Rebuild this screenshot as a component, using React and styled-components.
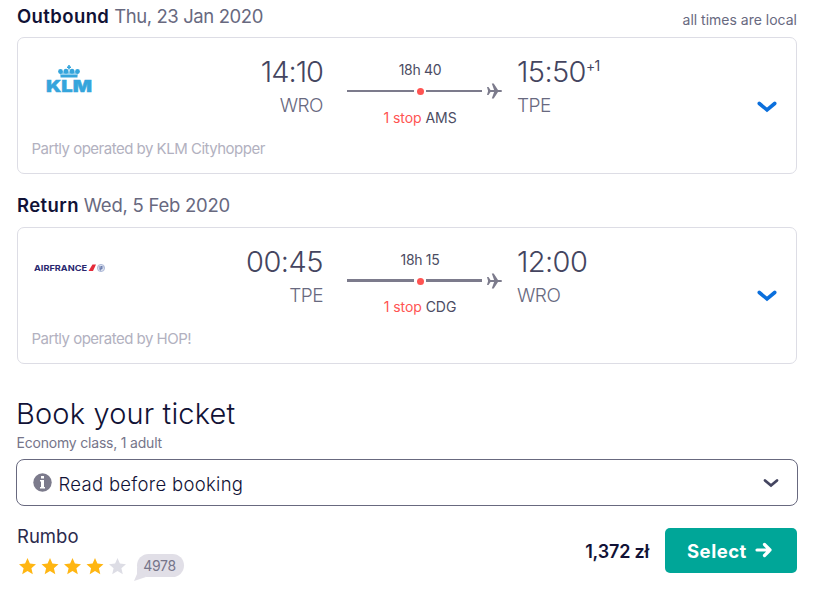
import styled, { createGlobalStyle } from 'styled-components'

const GlobalStyle = createGlobalStyle`
    * {
        box-sizing: border-box;
    }
    body {
        margin: 0;
        background: #fff;
        font-family: Inter, "Liberation Sans", sans-serif;
        color: #111236;
        overflow: hidden;
    }
    h2, h3, p {
        margin: 0;
        font-weight: 400;
    }
`

const Page = styled.div`
    width: 814px;
    height: 589px;
    padding: 0 17px;
`

const LegHeader = styled.div`
    display: flex;
    justify-content: space-between;
    align-items: flex-start;
    height: ${props => props.height}px;
    padding-top: ${props => props.padt}px;
`

const LegTitle = styled.h3`
    font-size: 18.5px;
    line-height: 24px;
    color: #68697f;
    letter-spacing: ${props => props.spacing}px;
    white-space: nowrap;
`

const Direction = styled.b`
    font-weight: 600;
    color: #111236;
    letter-spacing: 0.4px;
`

const LocalTimes = styled.span`
    font-size: 14px;
    line-height: 20px;
    margin-top: 6px;
    color: #68697f;
    letter-spacing: 0;
`

const Card = styled.section`
    height: 137px;
    border: 1px solid #dddde5;
    border-radius: 7px;
`

const Flight = styled.div`
    display: grid;
    grid-template-columns: 103px 202px 24px 155px 15px 1fr 50px;
    height: 100px;
`

const Logo = styled.div`
    display: flex;
    justify-content: center;
    align-items: flex-start;
    padding-top: ${props => props.padt}px;
`

const Endpoint = styled.div`
    padding-top: 16px;
    text-align: ${props => props.align};
    grid-column: ${props => props.column};
`

const Time = styled.div`
    font-size: 29px;
    line-height: 36px;
    font-weight: 300;
    color: #444560;
    letter-spacing: ${props => props.spacing}px;
    white-space: nowrap;
`

const DayOffset = styled.sup`
    font-size: 14px;
    font-weight: 400;
    line-height: 0;
    vertical-align: 11px;
    letter-spacing: -0.8px;
`

const Airport = styled.div`
    margin-top: 4px;
    font-size: 19px;
    line-height: 24px;
    font-weight: 300;
    color: #68697f;
    letter-spacing: -0.5px;
`

const Stops = styled.div`
    grid-column: 4;
    padding-top: 22px;
    font-size: 14px;
    line-height: 20px;
    color: #4c4c63;
`

const StopText = styled.div`
    width: 146px;
    text-align: center;
    letter-spacing: ${props => props.spacing}px;
`

const StopCount = styled.span`
    color: #ff5452;
`

const Route = styled.div`
    display: flex;
    align-items: center;
    height: ${props => props.height}px;
    margin-bottom: 6px;
`

const Line = styled.span`
    width: ${props => props.width}px;
    height: ${props => props.thick}px;
    background: #7c7b8c;
`

const Dot = styled.span`
    width: 7px;
    height: 7px;
    margin: 1px 2.5px 0;
    border-radius: 50%;
    background: #ff5452;
`

const PlaneIcon = styled.svg`
    margin-left: 5px;
`

const Expand = styled.div`
    grid-column: 7;
    padding: ${props => props.padt}px 0 0 11px;
`

const Operator = styled.p`
    padding-left: 13.5px;
    font-size: 15px;
    line-height: 21px;
    color: #b2b1c0;
    letter-spacing: -0.5px;
`

const BookTitle = styled.h2`
    margin: 32px 0 0 -1px;
    font-size: 29px;
    line-height: 36px;
    font-weight: 300;
    letter-spacing: 0.15px;
`

const Cabin = styled.p`
    margin: 1px 0 0 -0.5px;
    font-size: 14px;
    line-height: 20px;
    color: #76758a;
    letter-spacing: -0.2px;
`

const ReadBox = styled.div`
    display: flex;
    align-items: center;
    height: 47px;
    margin: 6px -1px 0;
    padding: 2px 18.5px 0 16px;
    border: 1px solid #68697f;
    border-radius: 8px;
    font-size: 18.5px;
    font-weight: 300;
    letter-spacing: 0.3px;
`

const InfoIcon = styled.svg`
    margin: -3px 6.5px 0 0;
`

const ReadChevron = styled.svg`
    margin-left: auto;
`

const Offer = styled.div`
    display: flex;
    justify-content: space-between;
    padding-top: 18px;
`

const Agent = styled.div`
    font-size: 18.5px;
    line-height: 24px;
    color: #2b2b4d;
`

const Rating = styled.div`
    display: flex;
    align-items: flex-start;
    margin-top: 6px;
`

const Stars = styled.svg`
    margin: 3px 0 0 1px;
`

const Reviews = styled.span`
    position: relative;
    width: 47px;
    height: 23px;
    margin-left: 9px;
    border-radius: 12px;
    background: #e1dfe7;
    font-size: 14px;
    line-height: 23px;
    text-align: center;
    color: #76758a;
    letter-spacing: -0.3px;
`

const BubbleTail = styled.svg`
    position: absolute;
    left: -3px;
    bottom: -4px;
`

const ReviewCount = styled.span`
    position: relative;
    margin-right: 2px;
`

const Purchase = styled.div`
    display: flex;
    align-items: center;
    gap: 16px;
    height: 45px;
    margin-top: 4px;
`

const Price = styled.span`
    font-size: 18px;
    font-weight: 600;
    margin-top: 2px;
    letter-spacing: -0.2px;
`

const SelectButton = styled.button`
    display: flex;
    align-items: center;
    width: 132px;
    height: 45px;
    padding: 0 0 0 22px;
    border: 0;
    border-radius: 5px;
    background: #00a698;
    color: #fff;
    font: 700 18.5px Inter, sans-serif;
    letter-spacing: 0.5px;
`

const ArrowIcon = styled.svg`
    margin: -2px 0 0 8px;
`

const KlmLogo = () => (
    <svg width="51" height="34" viewBox="0 0 51 34">
        <g fill="#35a5dc">
            <path d="M24.200 1h1.600v1.500H27V4h-1.200v1.500h-1.600V4H23V2.500h1.200z" />
            <circle cx="16.500" cy="7.500" r="2.400" />
            <circle cx="22" cy="7.300" r="2.500" />
            <circle cx="28" cy="7.300" r="2.500" />
            <circle cx="33.500" cy="7.500" r="2.400" />
            <path d="M15 8h20l-1.500 3.500h-17z" opacity=".55" />
            <path d="M16.500 11h17v2.500h-17z" />
        </g>
        <text x="2" y="27.500" fill="#35a5dc" stroke="#35a5dc" strokeWidth=".4" fontSize="16" fontWeight="900" fontFamily="Inter" textLength="46" lengthAdjust="spacingAndGlyphs">KLM</text>
    </svg>
)

const AirFranceLogo = () => (
    <svg width="71" height="12" viewBox="0 0 71 12">
        <text x="0" y="8" fill="#29286f" fontSize="8" fontWeight="700" fontFamily="Inter" textLength="53" lengthAdjust="spacingAndGlyphs">AIRFRANCE</text>
        <path d="M54.500 8l4-6.500h3.500L59 8z" fill="#e52a39" />
        <circle cx="67" cy="5" r="3.600" fill="#dce2ef" stroke="#9fadd0" strokeWidth=".8" />
        <path d="M64.800 4h4.500M67.500 3L66.500 7.500M65 6l3.500-.500" fill="none" stroke="#5266a0" strokeWidth=".8" />
    </svg>
)

const Chevron = () => (
    <svg width="20" height="14" viewBox="0 0 20 14">
        <path d="M2.300 3.500L10 9.800l7.700-6.300" fill="none" stroke="#0b6fdc" strokeWidth="3.600" strokeLinecap="round" strokeLinejoin="miter" />
    </svg>
)

const Plane = () => (
    <PlaneIcon width="15" height="16" viewBox="0 0 15 16">
        <path d="M0 4h1.500l2 2.900h3.600L4.800.5h1.900l4.300 6.400h2.900a1.100 1.100 0 0 1 0 2.200H11l-4.300 6.400H4.800l2.300-6.400H3.500L1.500 12H0l1.100-4z" fill="#7c7b8c" />
    </PlaneIcon>
)

const legs = [
    {
        direction: 'Outbound', date: 'Thu, 23 Jan 2020', note: 'all times are local', height: 37, padt: 4, thick: 2,
        dateSpacing: -0.4, departSpacing: -1, routeHeight: 22, expandTop: 60,
        logo: <KlmLogo />, logoTop: 26, depart: '14:10', from: 'WRO', arrive: '15:50', offset: '+1', to: 'TPE',
        duration: '18h 40', stop: 'AMS', operator: 'Partly operated by KLM Cityhopper',
    },
    {
        direction: 'Return', date: 'Wed, 5 Feb 2020', height: 53, padt: 19, thick: 3,
        dateSpacing: -0.25, departSpacing: -0.5, routeHeight: 21, expandTop: 59,
        logo: <AirFranceLogo />, logoTop: 35, depart: '00:45', from: 'TPE', arrive: '12:00', to: 'WRO',
        duration: '18h 15', stop: 'CDG', operator: 'Partly operated by HOP!',
    },
]

const Leg = ({ leg }) => {

    return <>
        <LegHeader height={leg.height} padt={leg.padt}>
            <LegTitle spacing={leg.dateSpacing}><Direction>{leg.direction}</Direction> {leg.date}</LegTitle>
            {leg.note ? <LocalTimes>{leg.note}</LocalTimes> : null}
        </LegHeader>
        <Card>
            <Flight>
                <Logo padt={leg.logoTop}>{leg.logo}</Logo>
                <Endpoint align='right' column={2}>
                    <Time spacing={leg.departSpacing}>{leg.depart}</Time>
                    <Airport>{leg.from}</Airport>
                </Endpoint>
                <Stops>
                    <StopText spacing={-0.3}>{leg.duration}</StopText>
                    <Route height={leg.routeHeight}>
                        <Line width={67} thick={leg.thick} />
                        <Dot />
                        <Line width={56} thick={leg.thick} />
                        <Plane />
                    </Route>
                    <StopText spacing={-0.05}><StopCount>1 stop</StopCount> {leg.stop}</StopText>
                </Stops>
                <Endpoint align='left' column={6}>
                    <Time spacing={-0.6}>{leg.arrive}{leg.offset ? <DayOffset>{leg.offset}</DayOffset> : null}</Time>
                    <Airport>{leg.to}</Airport>
                </Endpoint>
                <Expand padt={leg.expandTop}><Chevron /></Expand>
            </Flight>
            <Operator>{leg.operator}</Operator>
        </Card>
    </>
}

const star = 'M8.500 0l2.400 5.600 6.100.600-4.600 4 1.400 6-5.300-3.200-5.300 3.200 1.400-6L0 6.200l6.100-.600z'

export default function App() {

    return <>
        <GlobalStyle />
        <Page>
            {legs.map(leg => <Leg key={leg.direction} leg={leg} />)}

            <BookTitle>Book your ticket</BookTitle>
            <Cabin>Economy class, 1 adult</Cabin>
            <ReadBox>
                <InfoIcon width="19" height="19" viewBox="0 0 19 19">
                    <circle cx="9.500" cy="9.500" r="9.200" fill="#7c7b8c" />
                    <path d="M8 3h3v2.500H8zM7 7h4v7h1v1.500H7V14h1V8.500H7z" fill="#fff" />
                </InfoIcon>
                Read before booking
                <ReadChevron width="16" height="12" viewBox="0 0 16 12">
                    <path d="M2 2.500l6 5 6-5" fill="none" stroke="#444560" strokeWidth="2.800" strokeLinecap="round" />
                </ReadChevron>
            </ReadBox>

            <Offer>
                <div>
                    <Agent>Rumbo</Agent>
                    <Rating>
                        <Stars width="110" height="18" viewBox="0 0 110 18">
                            {[0, 1, 2, 3, 4].map(i =>
                                <path key={i} d={star} transform={`translate(${i * 22.5 + 1} 1)`} fill={i < 4 ? '#ffb612' : '#dddde5'} />
                            )}
                        </Stars>
                        <Reviews>
                            <BubbleTail width="14" height="14" viewBox="0 0 14 14">
                                <path d="M3 0v7L0 14l12-4z" fill="#e1dfe7" />
                            </BubbleTail>
                            <ReviewCount>4978</ReviewCount>
                        </Reviews>
                    </Rating>
                </div>
                <Purchase>
                    <Price>1,372 zł</Price>
                    <SelectButton>
                        Select
                        <ArrowIcon width="18" height="16" viewBox="0 0 18 16">
                            <path d="M2 8h13M9.500 2.500L15 8l-5.500 5.500" fill="none" stroke="#fff" strokeWidth="3.200" strokeLinecap="round" strokeLinejoin="round" />
                        </ArrowIcon>
                    </SelectButton>
                </Purchase>
            </Offer>
        </Page>
    </>
}
